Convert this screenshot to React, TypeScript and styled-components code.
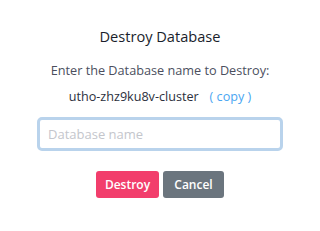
import React from "react";
import styled, { createGlobalStyle } from "styled-components";

const GlobalStyle = createGlobalStyle`
  body {
    margin: 0;
    background: #ffffff;
    font-family: "Open Sans", "Noto Sans", sans-serif;
  }
`;

const Wrap = styled.div`
  width: 320px;
  height: 231px;
  display: flex;
  flex-direction: column;
  align-items: center;
  padding-top: 26px;
  box-sizing: border-box;
`;

const Title = styled.div`
  font-size: 14.6px;
  line-height: 20px;
  font-weight: 500;
  color: #1a1e2b;
`;

const Text = styled.div`
  margin-top: 14px;
  font-size: 12.7px;
  line-height: 20px;
  color: #4b4f5e;
`;

const NameRow = styled.div`
  margin-top: 7px;
  display: flex;
  gap: 11px;
  font-size: 12.6px;
  line-height: 20px;
  color: #2b2f3c;
`;

const Copy = styled.span`
  color: #4aa6f2;
  cursor: pointer;
`;

const Input = styled.input`
  margin-top: 10px;
  width: 246px;
  height: 34px;
  box-sizing: border-box;
  border: 3px solid #b9d3ec;
  border-radius: 5px;
  padding: 0 8px;
  font-family: inherit;
  font-size: 13px;
  color: #333;
  outline: none;
  &::placeholder {
    color: #c4c6cc;
  }
`;

const Buttons = styled.div`
  margin-top: 20px;
  display: flex;
  gap: 4px;
`;

const Button = styled.button<{ $bg: string; $w: number }>`
  width: ${(p) => p.$w}px;
  height: 27px;
  border: none;
  border-radius: 3px;
  background: ${(p) => p.$bg};
  color: #ffffff;
  font-family: inherit;
  font-size: 12px;
  font-weight: 600;
  padding: 0;
  cursor: pointer;
`;

export default function App() {
  return (
    <>
      <GlobalStyle />
      <Wrap>
        <Title>Destroy Database</Title>
        <Text>Enter the Database name to Destroy:</Text>
        <NameRow>
          <span>utho-zhz9ku8v-cluster</span>
          <Copy>( copy )</Copy>
        </NameRow>
        <Input placeholder="Database name" />
        <Buttons>
          <Button $bg="#f23e6c" $w={63}>Destroy</Button>
          <Button $bg="#6b757e" $w={61}>Cancel</Button>
        </Buttons>
      </Wrap>
    </>
  );
}
